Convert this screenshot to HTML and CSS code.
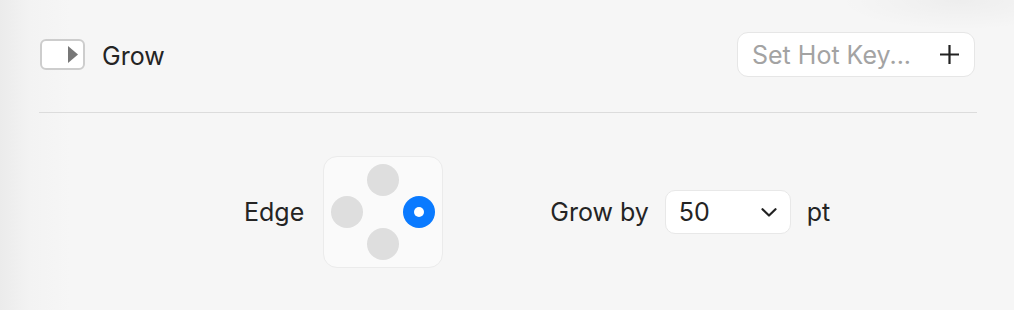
FILE: index.html
```html
<!DOCTYPE html>
<html lang="en">
<head>
  <meta charset="UTF-8" />
  <title>Grow</title>
  <link rel="stylesheet" href="styles.css">
</head>
<body>
  <div class="panel">
    <div class="header-row">
      <div class="title-group">
        <button class="disclosure" aria-label="Expand">
          <svg width="10" height="17" viewBox="0 0 10 17"><path d="M0 0 L10 8.5 L0 17 Z" fill="#777" /></svg>
        </button>
        <span class="title">Grow</span>
      </div>
      <div class="hotkey">
        <span class="hotkey-placeholder">Set Hot Key...</span>
        <svg class="plus" width="19" height="19" viewBox="0 0 19 19">
          <path d="M9.5 0 V19 M0 9.5 H19" stroke="#222" stroke-width="2.2" />
        </svg>
      </div>
    </div>

    <div class="divider"></div>

    <div class="options-row">
      <span class="label">Edge</span>
      <div class="edge-pad">
        <span></span><span class="dot"></span><span></span>
        <span class="dot"></span><span></span><span class="dot selected"></span>
        <span></span><span class="dot"></span><span></span>
      </div>
      <span class="label grow-label">Grow by</span>
      <div class="select">
        <span>50</span>
        <svg width="16" height="9" viewBox="0 0 16 9"><path d="M1.5 1.2 L8 7.5 L14.5 1.2" fill="none" stroke="#222" stroke-width="2.2" stroke-linecap="round" stroke-linejoin="round" /></svg>
      </div>
      <span class="label">pt</span>
    </div>
  </div>
</body>
</html>
```

FILE: styles.css
```css
html, body {
  margin: 0;
  height: 100%;
}

body {
  font-family: Inter, 'Noto Sans', sans-serif;
  color: #242424;
  background:
    radial-gradient(ellipse 120px 30px at 960px 0, rgba(0, 0, 0, 0.035), transparent),
    linear-gradient(90deg, #ebebeb 0, #f3f3f3 30px, #f6f6f6 70px);
  background-color: #f6f6f6;
  overflow: hidden;
}

.panel {
  padding: 32px 37px 0 39px;
}

.header-row {
  display: flex;
  align-items: center;
  justify-content: space-between;
  height: 45px;
}

.title-group {
  display: flex;
  align-items: center;
  gap: 17px;
  padding-left: 1px;
}

.disclosure {
  width: 45px;
  height: 31px;
  box-sizing: border-box;
  background: #fff;
  border: 2px solid #cdcdcd;
  border-radius: 6px;
  display: flex;
  align-items: center;
  justify-content: flex-end;
  padding: 0 5px 0 0;
  margin: 0;
}

.disclosure svg {
  display: block;
}

.title {
  font-size: 25px;
  padding-top: 3px;
}

.hotkey {
  width: 238px;
  height: 45px;
  box-sizing: border-box;
  margin-right: 2px;
  background: #fff;
  border: 1px solid #e6e6e6;
  border-radius: 11px;
  display: flex;
  align-items: center;
  justify-content: space-between;
  padding: 0 15px 0 14px;
}

.hotkey-placeholder {
  font-size: 25px;
  color: #a3a3a3;
}

.plus {
  display: block;
}

.divider {
  height: 1px;
  background: #dcdcdc;
  margin-top: 35px;
}

.options-row {
  display: flex;
  align-items: center;
  padding-left: 205px;
  margin-top: 43px;
}

.label {
  font-size: 25px;
}

.edge-pad {
  width: 120px;
  height: 112px;
  box-sizing: border-box;
  margin-left: 19px;
  background: #fafafa;
  border: 1px solid #ebebeb;
  border-radius: 14px;
  padding: 7px 7px;
  display: grid;
  grid-template-columns: 32px 32px 32px;
  grid-template-rows: 32px 32px 32px;
  column-gap: 4px;
}

.edge-pad span {
  width: 32px;
  height: 32px;
}

.edge-pad .dot {
  border-radius: 50%;
  background: #dedede;
}

.edge-pad .dot.selected {
  background: #0a7aff;
  position: relative;
}

.edge-pad .dot.selected::after {
  content: "";
  position: absolute;
  left: 11px;
  top: 11px;
  width: 10px;
  height: 10px;
  border-radius: 50%;
  background: #fff;
}

.grow-label {
  margin-left: 107px;
}

.select {
  width: 126px;
  height: 44px;
  box-sizing: border-box;
  margin: 0 16px;
  background: #fff;
  border: 1px solid #e8e8e8;
  border-radius: 10px;
  display: flex;
  align-items: center;
  justify-content: space-between;
  padding: 0 13px 0 13px;
  font-size: 25px;
}

.select svg {
  display: block;
}
```
